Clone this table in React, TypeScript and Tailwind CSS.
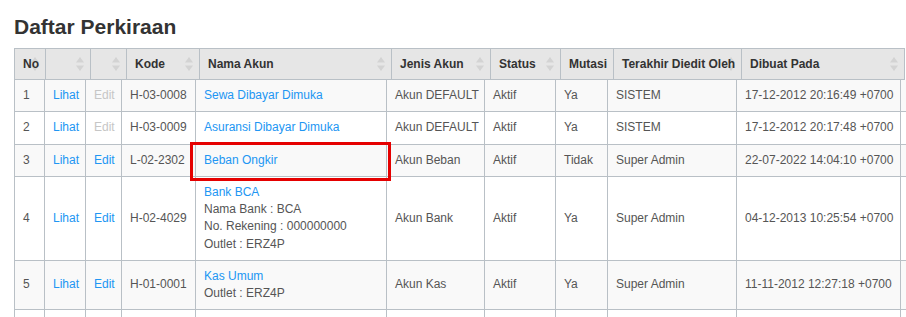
import React from 'react';

type Row = {
    no: string;
    editable: boolean;
    kode: string;
    nama: string;
    extra?: string[];
    jenis: string;
    status: string;
    mutasi: string;
    editor: string;
    dibuat: string;
    marked?: boolean;
};

const rows: Row[] = [
    { no: '1', editable: false, kode: 'H-03-0008', nama: 'Sewa Dibayar Dimuka', jenis: 'Akun DEFAULT', status: 'Aktif', mutasi: 'Ya', editor: 'SISTEM', dibuat: '17-12-2012 20:16:49 +0700' },
    { no: '2', editable: false, kode: 'H-03-0009', nama: 'Asuransi Dibayar Dimuka', jenis: 'Akun DEFAULT', status: 'Aktif', mutasi: 'Ya', editor: 'SISTEM', dibuat: '17-12-2012 20:17:48 +0700' },
    { no: '3', editable: true, kode: 'L-02-2302', nama: 'Beban Ongkir', jenis: 'Akun Beban', status: 'Aktif', mutasi: 'Tidak', editor: 'Super Admin', dibuat: '22-07-2022 14:04:10 +0700', marked: true },
    { no: '4', editable: true, kode: 'H-02-4029', nama: 'Bank BCA', extra: ['Nama Bank : BCA', 'No. Rekening : 000000000', 'Outlet : ERZ4P'], jenis: 'Akun Bank', status: 'Aktif', mutasi: 'Ya', editor: 'Super Admin', dibuat: '04-12-2013 10:25:54 +0700' },
    { no: '5', editable: true, kode: 'H-01-0001', nama: 'Kas Umum', extra: ['Outlet : ERZ4P'], jenis: 'Akun Kas', status: 'Aktif', mutasi: 'Ya', editor: 'Super Admin', dibuat: '11-11-2012 12:27:18 +0700' },
];

const headers: { label: string; w: number; sort: boolean }[] = [
    { label: 'No', w: 31, sort: true },
    { label: '', w: 45, sort: true },
    { label: '', w: 36, sort: true },
    { label: 'Kode', w: 73, sort: true },
    { label: 'Nama Akun', w: 192, sort: true },
    { label: 'Jenis Akun', w: 99, sort: true },
    { label: 'Status', w: 70, sort: true },
    { label: 'Mutasi', w: 53, sort: false },
    { label: 'Terakhir Diedit Oleh', w: 128, sort: true },
    { label: 'Dibuat Pada', w: 163, sort: true },
];

const bodyCols = [30, 41, 36, 74, 191, 98, 71, 52, 129, 164, 140];

const SortIcon = () => (
    <svg width="8" height="16" viewBox="0 0 8 16" className="absolute right-[6px] top-1/2 -translate-y-1/2">
        <polygon points="4,1 8,6.5 0,6.5" fill="#d3d3d3" />
        <polygon points="0,9.5 8,9.5 4,15" fill="#d3d3d3" />
    </svg>
);

const td = 'border border-[#b9c0c6] px-2 py-[7.1px] align-middle whitespace-nowrap';

export default function App() {
    return (
        <div className="w-[906px] h-[317px] overflow-hidden bg-white pl-[14px] pt-[16px] text-[12px] leading-[1.42857] text-[#555]" style={{ fontFamily: '"Liberation Sans", Arial, sans-serif' }}>
            <h2 className="text-[21px] leading-[21px] font-bold text-[#333]">Daftar Perkiraan</h2>

            {/* header table (scroll head) */}
            <table className="mt-[11px] table-fixed border-collapse" style={{ width: 891 }}>
                <colgroup>
                    {headers.map((h, i) => <col key={i} style={{ width: h.w }} />)}
                </colgroup>
                <thead>
                    <tr className="bg-[#e6e6e6]">
                        {headers.map((h, i) => (
                            <th key={i} className="relative border border-[#b9c0c6] px-2 py-[6px] text-left font-bold leading-[18px] text-[#333] whitespace-nowrap">
                                {h.sort && <SortIcon />}
                                <span className="relative">{h.label}</span>
                            </th>
                        ))}
                    </tr>
                </thead>
            </table>

            {/* body table */}
            <table className="table-fixed border-collapse" style={{ width: 1027 }}>
                <colgroup>
                    {bodyCols.map((w, i) => <col key={i} style={{ width: w }} />)}
                </colgroup>
                <tbody>
                    {rows.map((r, i) => (
                        <tr key={r.no} className={i % 2 === 0 ? 'bg-[#f9f9f9]' : 'bg-white'}>
                            <td className={`${td} ${i === 0 ? 'border-t-0' : ''}`}>{r.no}</td>
                            <td className={`${td} ${i === 0 ? 'border-t-0' : ''} text-[#2196f3]`}>Lihat</td>
                            <td className={`${td} ${i === 0 ? 'border-t-0' : ''} ${r.editable ? 'text-[#2196f3]' : 'text-[#c6c6c6]'}`}>Edit</td>
                            <td className={`${td} ${i === 0 ? 'border-t-0' : ''}`}>{r.kode}</td>
                            <td className={`${td} ${i === 0 ? 'border-t-0' : ''} relative`}>
                                <div className="text-[#2196f3]">{r.nama}</div>
                                {r.extra?.map(e => <div key={e}>{e}</div>)}
                                {r.marked && (
                                    <span className="absolute -left-[6px] -right-[5px] -top-[3px] -bottom-[5px] border-[3px] border-[#e50000]" />
                                )}
                            </td>
                            <td className={`${td} ${i === 0 ? 'border-t-0' : ''}`}>{r.jenis}</td>
                            <td className={`${td} ${i === 0 ? 'border-t-0' : ''}`}>{r.status}</td>
                            <td className={`${td} ${i === 0 ? 'border-t-0' : ''}`}>{r.mutasi}</td>
                            <td className={`${td} ${i === 0 ? 'border-t-0' : ''}`}>{r.editor}</td>
                            <td className={`${td} ${i === 0 ? 'border-t-0' : ''}`}>{r.dibuat}</td>
                            <td className={`${td} ${i === 0 ? 'border-t-0' : ''}`}></td>
                        </tr>
                    ))}
                    <tr className="bg-white">
                        {bodyCols.map((_, i) => <td key={i} className={td}>&nbsp;</td>)}
                    </tr>
                </tbody>
            </table>
        </div>
    );
}
